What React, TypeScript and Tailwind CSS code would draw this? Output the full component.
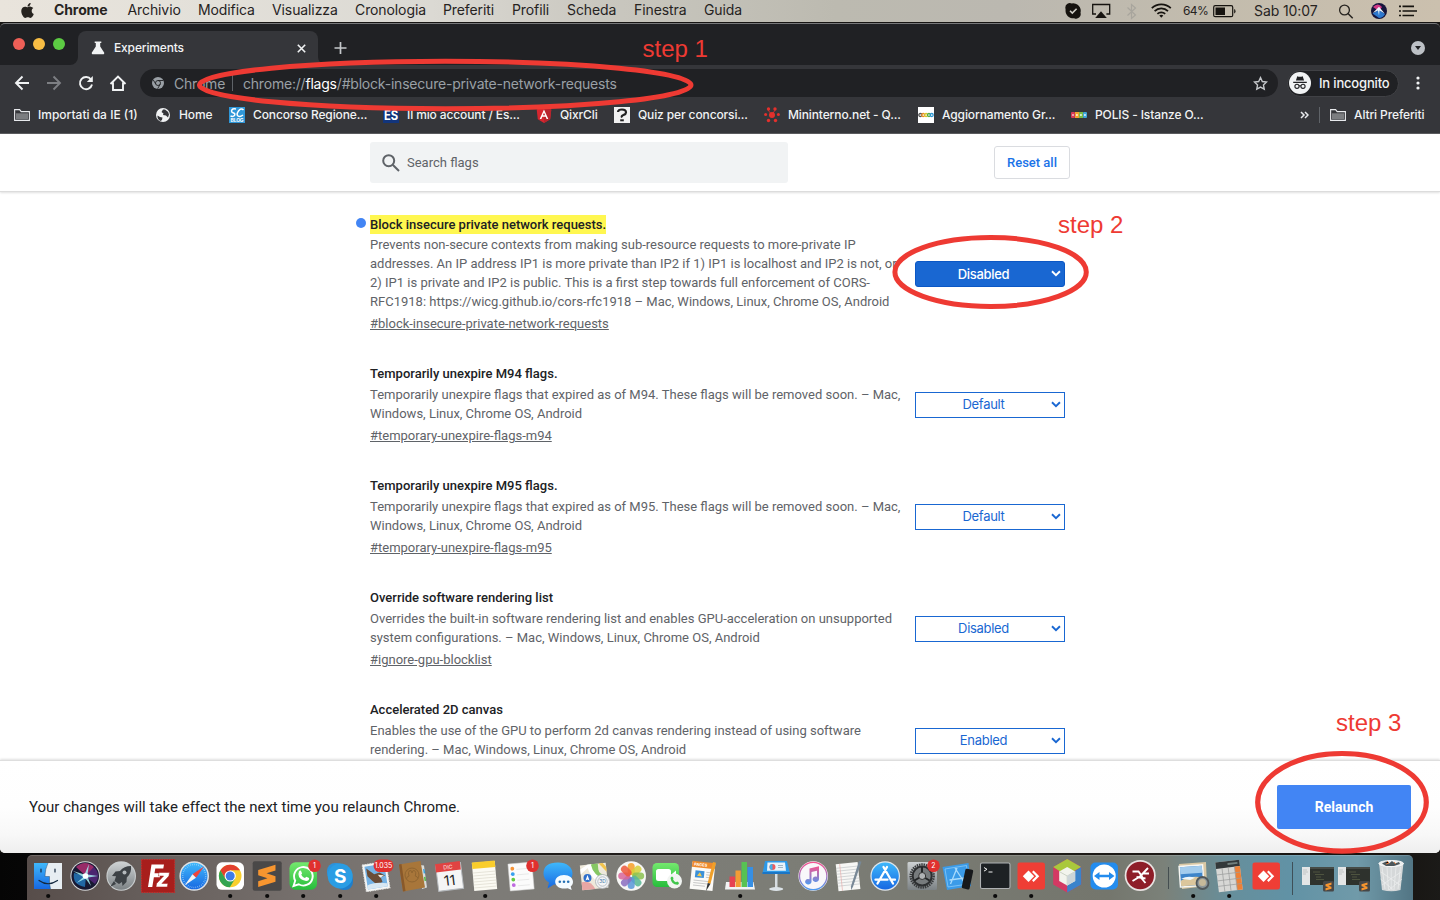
import React from "react";
import { FaApple } from "react-icons/fa";

type Kids = { children?: React.ReactNode };

/* ---------- macOS menu bar ---------- */

const Menu = ({ w, bold, children }: { w: string; bold?: boolean } & Kids) => (
  <span className={`${w} shrink-0 whitespace-nowrap ${bold ? "font-bold" : ""}`}>{children}</span>
);

const MenuBar = () => (
  <div className="flex h-[22px] items-center bg-[linear-gradient(90deg,#e9e4dc_0%,#e4e1da_12%,#dbd9d3_30%,#c9c7bf_42%,#bcbab0_58%,#bbb8b0_70%,#c3bcad_85%,#cbc0ae_100%)] text-[14px] leading-[20px] tracking-[-0.100px] text-[#26231f]">
    <span className="flex w-[54px] shrink-0 pb-[1px] pl-[20px]">
      <FaApple className="h-[17px] w-[15px]" />
    </span>
    <div className="flex pb-[2px]">
      <Menu w="w-[73.5px]" bold>Chrome</Menu>
      <Menu w="w-[70.5px]">Archivio</Menu>
      <Menu w="w-[74px]">Modifica</Menu>
      <Menu w="w-[83px]">Visualizza</Menu>
      <Menu w="w-[88px]">Cronologia</Menu>
      <Menu w="w-[69px]">Preferiti</Menu>
      <Menu w="w-[55px]">Profili</Menu>
      <Menu w="w-[67px]">Scheda</Menu>
      <Menu w="w-[70px]">Finestra</Menu>
      <Menu w="w-[361px]">Guida</Menu>
    </div>
    <svg className="h-[22px] w-[118px] shrink-0" viewBox="1065 0 118 22" fill="none">
      <path d="M1065.3 7.500a4.500 4.500 0 0 1 6.500-4 7.500 7.500 0 0 1 8.700 9.300 4.500 4.500 0 0 1-6.300 5.400 7.500 7.500 0 0 1-8.600-8.400z" fill="#16130f" />
      <path d="m1070 10.800 2.300 2.300 4.300-4.400" stroke="#d0cec6" strokeWidth="1.600" />
      <path d="M1096 14h-3.300V4.500h17V14h-3.300" stroke="#16130f" strokeWidth="1.300" />
      <path d="m1101 11.200 5.800 6.800h-11.600z" fill="#16130f" />
      <path d="m1127.500 7.500 8 7.500-4 3.500v-14l4 3.500-8 7.500" stroke="#a8a59d" strokeWidth="1.200" />
      <g stroke="#16130f" strokeWidth="1.700">
        <path d="M1151.800 8.200a13.500 13.500 0 0 1 19 0" />
        <path d="M1154.600 11.100a9.500 9.500 0 0 1 13.400 0" />
        <path d="M1157.400 13.900a5.600 5.600 0 0 1 7.800 0" />
      </g>
      <path d="m1161.300 17.700-2-2.100a3 3 0 0 1 4 0z" fill="#16130f" />
    </svg>
    <span className="w-[30px] shrink-0 text-[12px] tracking-[-0.600px]">64%</span>
    <svg className="h-[22px] w-[41px] shrink-0" viewBox="1213 0 41 22" fill="none">
      <rect x="1213.700" y="5.700" width="19" height="11" rx="1.500" stroke="#16130f" strokeWidth="1.200" />
      <rect x="1215.500" y="7.500" width="9.500" height="7.500" fill="#16130f" />
      <path d="M1234.200 9v4.500q1.300-.5 1.300-2.200t-1.300-2.300" fill="#16130f" />
    </svg>
    <span className="w-[84px] shrink-0 pb-[1px] whitespace-nowrap">Sab 10:07</span>
    <svg className="h-[22px] w-[102px] shrink-0" viewBox="1338 0 102 22" fill="none">
      <circle cx="1344.500" cy="10" r="4.900" stroke="#26231f" strokeWidth="1.300" />
      <path d="m1348 13.500 4.700 4.700" stroke="#26231f" strokeWidth="1.500" />
      <circle cx="1379" cy="11" r="8" fill="#15143c" />
      <path d="M1373 7q5-5 9 0l-3 4z" fill="#d23a86" />
      <path d="M1372.500 13.500 1379 10l6 4q-2 4-6 4z" fill="#2d78cf" />
      <path d="m1372.800 13 6.200-6.300 5.700 6.800-5.200-3-.5 5-1-5z" fill="#e9f5fd" />
      <path d="M1399 6.300h2m1.500 0H1414M1399 11h2m1.500 0H1417M1399 15.500h2m1.500 0H1414" stroke="#16130f" strokeWidth="1.700" />
    </svg>
  </div>
);

/* ---------- browser chrome ---------- */

const TabStrip = () => (
  <div className="flex h-[42px] items-end rounded-t-[5px] border-t border-[#77787a] bg-[#202124]">
    <div className="flex h-full w-[70px] shrink-0 items-center gap-[8px] pb-[1px] pl-[13px]">
      <i className="size-[12px] rounded-full bg-[#ee5f57]" />
      <i className="size-[12px] rounded-full bg-[#f8bd44]" />
      <i className="size-[12px] rounded-full bg-[#5ccb43]" />
    </div>
    <svg className="size-[8px] shrink-0" viewBox="0 0 8 8"><path d="M8 0v8H0a8 8 0 0 0 8-8" fill="#35363a" /></svg>
    <div className="flex h-[34px] w-[240px] shrink-0 items-center rounded-t-[8px] bg-[#35363a] pl-[13px]">
      <svg className="h-[14px] w-[14px]" viewBox="0 0 14 14" fill="#f1f3f4">
        <path d="M3.700.5h6.600v1.600H9.200v3.400l3.900 6a1.200 1.200 0 0 1-1 1.800H1.900a1.200 1.200 0 0 1-1-1.800l3.900-6V2.100H3.700z" />
      </svg>
      <span className="ml-[9px] w-[183px] text-[12px] font-medium tracking-[-0.150px] text-[#f1f3f4]">Experiments</span>
      <svg className="size-[9px]" viewBox="0 0 9 9"><path d="m.8.8 7.400 7.400m0-7.400L.8 8.200" stroke="#f1f3f4" strokeWidth="1.600" /></svg>
    </div>
    <svg className="size-[8px] shrink-0" viewBox="0 0 8 8"><path d="M0 0v8h8a8 8 0 0 1-8-8" fill="#35363a" /></svg>
    <svg className="ml-[7.500px] h-[34px] w-[13px] shrink-0" viewBox="0 0 13 34"><path d="M6.500 11v12M.5 17h12" stroke="#c4c7ca" strokeWidth="1.700" /></svg>
    <svg className="mr-[15px] ml-auto h-[34px] w-[14px]" viewBox="0 0 14 34">
      <circle cx="7" cy="17" r="7" fill="#bdc1c6" />
      <path d="M4 15h6l-3 4z" fill="#202124" />
    </svg>
  </div>
);

const Toolbar = () => (
  <div className="flex h-[36px] items-center bg-[#35363a]">
    <svg className="h-[36px] w-[140px] shrink-0" viewBox="0 65 140 36" fill="none" strokeWidth="1.900">
      <path d="M29 83H16m6.500-6.500L16 83l6.500 6.500" stroke="#f1f3f4" />
      <path d="M47 83h13m-6.500-6.500L60 83l-6.500 6.500" stroke="#7d7f83" />
      <path d="M91 79.500A6.100 6.100 0 1 0 92 84.500" stroke="#f1f3f4" />
      <path d="M92.800 76v6h-6z" fill="#f1f3f4" />
      <path d="M110.500 84 118 76.500l7.500 7.500M113 82.500V90h10v-7.500" stroke="#f1f3f4" />
    </svg>
    <div className="flex h-[28px] w-[1138px] shrink-0 items-center rounded-full bg-[#202124] pl-[12px] text-[14px] tracking-[-0.205px] text-[#9aa0a6]">
      <svg className="size-[12px] shrink-0" viewBox="0 0 12 12">
        <circle cx="6" cy="6" r="6" fill="#9aa0a6" />
        <circle cx="6" cy="6" r="2.500" fill="none" stroke="#202124" strokeWidth=".9" />
        <path d="M6 3.500h5.300M3.800 7.200 1.200 2.800M8.200 7.200 5.600 11.800" stroke="#202124" strokeWidth=".9" />
      </svg>
      <span className="ml-[10px] w-[58px] shrink-0">Chrome</span>
      <i className="mr-[10px] h-[16px] w-px bg-[#5f6368]" />
      <span className="w-[1010px] shrink-0 whitespace-nowrap">chrome://<span className="text-white">flags</span>/#block-insecure-private-network-requests</span>
      <svg className="size-[15px] shrink-0" viewBox="0 0 24 24" fill="none" stroke="#c4c7ca" strokeWidth="2.200">
        <path d="m12 2.500 2.900 6.300 6.800.8-5 4.700 1.300 6.800-6-3.400-6 3.400 1.300-6.800-5-4.700 6.800-.8z" />
      </svg>
    </div>
    <div className="ml-[9px] flex h-[27px] w-[112px] shrink-0 items-center rounded-full border border-[#404145] bg-[#202124] pl-[1px]">
      <svg className="size-[22px] shrink-0" viewBox="0 0 22 22">
        <circle cx="11" cy="11" r="11" fill="#f1f3f4" />
        <path d="M8.300 4.200q2.700 1 5.400 0l1.400 4.300H6.900zM4.200 9.700h13.600v1.200H4.200z" fill="#202124" />
        <g fill="none" stroke="#202124" strokeWidth="1.100"><circle cx="8" cy="14.300" r="2.100" /><circle cx="14" cy="14.300" r="2.100" /><path d="M10 14q1-.6 2 0" /></g>
      </svg>
      <span className="ml-[8px] pt-[1px] text-[13px] font-medium tracking-[-0.180px] whitespace-nowrap text-[#f1f3f4]">In incognito</span>
    </div>
    <svg className="ml-[17px] h-[14px] w-[4px]" viewBox="0 0 4 14" fill="#f1f3f4"><circle cx="2" cy="2" r="1.600" /><circle cx="2" cy="7" r="1.600" /><circle cx="2" cy="12" r="1.600" /></svg>
  </div>
);

const Bookmark = ({ w, icon, children }: { w: string; icon: React.ReactNode } & Kids) => (
  <div className={`flex ${w} h-full shrink-0 items-center gap-[8px] whitespace-nowrap`}>
    <svg className="size-[16px] shrink-0 overflow-visible" viewBox="0 0 16 16">{icon}</svg>
    <span>{children}</span>
  </div>
);

const folder = (
  <>
    <path d="M.6 13.400V2.600h5l1.600 2h8.200v8.800z" fill="none" stroke="#e8eaed" strokeWidth="1.100" />
    <path d="M2 6.300h12v5.800H2z" fill="#7b7d80" />
  </>
);

const BookmarksBar = () => (
  <div className="flex h-[33px] items-center border-b border-[#5a5b5e] bg-[#35363a] pb-[4px] pl-[14px] text-[12px] font-medium tracking-[-0.120px] text-[#f1f3f4]">
    <Bookmark w="w-[141px]" icon={folder}><span className="tracking-normal">Importati da IE (1)</span></Bookmark>
    <Bookmark w="w-[74px]" icon={<><circle cx="8" cy="8" r="7" fill="#f1f3f4" /><path d="M2.500 8.500 5 10l2.500.5L7 13l-1.500 1Q2 12 2.500 8.500M8 2.500 6.500 5l2 1.500L8 8l3 .5 2 2 1-3Q13 4 10 2.500z" fill="#35363a" /></>}>Home</Bookmark>
    <Bookmark w="w-[154px]" icon={<><path d="M0 0h16v16H0z" fill="#2f97d8" /><g fill="none" stroke="#fff"><path d="M7 2Q3 1 2.500 4q0 1.500 2 2t1 2.500Q4 10 1.500 9" strokeWidth="1.500" /><path d="M14.500 3Q12 .5 9.500 4t-.5 5q2 1.500 5-1" strokeWidth="1.500" /></g><text x="1.500" y="15" fontSize="5" fontWeight="bold" fill="#fff" textLength="13">BLOG</text></>}>Concorso Regione...</Bookmark>
    <Bookmark w="w-[153px]" icon={<><path d="M0 0h16v16H0z" fill="#12357c" /><text x="1" y="13" fontSize="13" fontWeight="bold" fill="#fff" textLength="14" lengthAdjust="spacingAndGlyphs">ES</text></>}>Il mio account / Es...</Bookmark>
    <Bookmark w="w-[78px]" icon={<><path d="m8 0 7.300 2.600-1.100 9.700L8 16l-6.200-3.700L.7 2.600z" fill="#d6262f" /><path d="m8 0 7.300 2.600-1.100 9.700L8 16z" fill="#b8242d" /><path d="m3.700 12 4.300-9.500 4.300 9.500h-1.700l-.9-2.200H6.300L5.400 12zm3.200-3.700h2.200L8 5.700z" fill="#fff" /></>}>QixrCli</Bookmark>
    <Bookmark w="w-[150px]" icon={<><path d="M0 0h16v16H0z" fill="#f1f1f1" /><path d="M4 5Q4 2.500 8 2.500T12 5.500Q12 7 9.500 8T8 10.500" fill="none" stroke="#222" strokeWidth="2.200" /><path d="M6.200 12.300h3.600v2H6.200z" fill="#222" /></>}>Quiz per concorsi...</Bookmark>
    <Bookmark w="w-[154px]" icon={<g fill="#e3302c"><circle cx="8" cy="8" r="3" /><circle cx="1.600" cy="7.500" r="1.500" /><circle cx="14.400" cy="7.500" r="1.500" /><circle cx="4.500" cy="2" r="1.700" /><circle cx="11" cy="2" r="1.700" /><circle cx="4.500" cy="13.500" r="1.700" /><circle cx="11.500" cy="13.500" r="1.700" /><path d="m4 3 4 5M11 3 8 8" stroke="#e3302c" strokeWidth=".8" /></g>}>Mininterno.net - Q...</Bookmark>
    <Bookmark w="w-[153px]" icon={<><path d="M0 0h16v16H0z" fill="#fff" /><g fill="none" strokeWidth="1.300"><circle cx="2.300" cy="8" r="1.500" stroke="#555" /><circle cx="5.200" cy="8" r="1.500" stroke="#e98b20" /><circle cx="8.100" cy="8" r="1.500" stroke="#d8c529" /><circle cx="11" cy="8" r="1.500" stroke="#4fae4a" /><circle cx="13.700" cy="8" r="1.500" stroke="#2d95d3" /></g></>}>Aggiornamento Gr...</Bookmark>
    <Bookmark w="w-[229px]" icon={<><rect x="0" y="5" width="4" height="6" rx="1" fill="#d43a56" /><path d="M4 5h4v6H4z" fill="#efa22f" /><path d="M8 5h4v6H8z" fill="#7bbb45" /><rect x="12" y="5" width="4" height="6" rx="1" fill="#3ea5d8" /><path d="M1.500 7h1v2h-1zM5.300 7h1.300v2H5.300zM9.300 7h1.300v2H9.300zM13.300 7h1.300v2h-1.300z" fill="#fff" /></>}>POLIS - Istanze O...</Bookmark>
    <svg className="h-[8px] w-[9px] shrink-0" viewBox="0 0 9 8" fill="none" stroke="#e8eaed" strokeWidth="1.500"><path d="m1 1 3 3-3 3M5 1l3 3-3 3" /></svg>
    <i className="mr-[10px] ml-[10px] h-[16px] w-px bg-[#5f6368]" />
    <Bookmark w="w-[100px]" icon={folder}>Altri Preferiti</Bookmark>
  </div>
);

/* ---------- flags page ---------- */

const Chevron = () => (
  <svg className="h-[7px] w-[10px]" viewBox="0 0 10 7" fill="none" stroke="currentColor" strokeWidth="1.900"><path d="m1 1.200 4 4 4-4" /></svg>
);

type Flag = { title: string; lines: string[]; link?: string; value: string; active?: boolean };

const flags: Flag[] = [
  {
    title: "Block insecure private network requests.",
    lines: [
      "Prevents non-secure contexts from making sub-resource requests to more-private IP",
      "addresses. An IP address IP1 is more private than IP2 if 1) IP1 is localhost and IP2 is not, or",
      "2) IP1 is private and IP2 is public. This is a first step towards full enforcement of CORS-",
      "RFC1918: https://wicg.github.io/cors-rfc1918 – Mac, Windows, Linux, Chrome OS, Android",
    ],
    link: "#block-insecure-private-network-requests",
    value: "Disabled",
    active: true,
  },
  {
    title: "Temporarily unexpire M94 flags.",
    lines: ["Temporarily unexpire flags that expired as of M94. These flags will be removed soon. – Mac,", "Windows, Linux, Chrome OS, Android"],
    link: "#temporary-unexpire-flags-m94",
    value: "Default",
  },
  {
    title: "Temporarily unexpire M95 flags.",
    lines: ["Temporarily unexpire flags that expired as of M95. These flags will be removed soon. – Mac,", "Windows, Linux, Chrome OS, Android"],
    link: "#temporary-unexpire-flags-m95",
    value: "Default",
  },
  {
    title: "Override software rendering list",
    lines: ["Overrides the built-in software rendering list and enables GPU-acceleration on unsupported", "system configurations. – Mac, Windows, Linux, Chrome OS, Android"],
    link: "#ignore-gpu-blocklist",
    value: "Disabled",
  },
  {
    title: "Accelerated 2D canvas",
    lines: ["Enables the use of the GPU to perform 2d canvas rendering instead of using software", "rendering. – Mac, Windows, Linux, Chrome OS, Android"],
    value: "Enabled",
  },
];

const FlagRow = ({ f }: { f: Flag }) => (
  <div className="mb-[31.100px] flex shrink-0 items-center">
    <div className="w-[559px] shrink-0 whitespace-nowrap text-[#5f6368]">
      <div className="flex h-[19px] items-center text-[#202124]">
        <span className="flex w-[14px] pb-[3px]">{f.active && <i className="size-[10px] rounded-full bg-[#4285f4]" />}</span>
        <span className={`leading-[19px] font-medium ${f.active ? "bg-[#fff750]" : ""}`}>{f.title}</span>
      </div>
      <div className="mt-[2.900px] pl-[14px] leading-[18.800px]">
        {f.lines.map((l) => <div key={l}>{l}</div>)}
      </div>
      <div className="mt-[2.400px] h-[19px] pl-[14px] leading-[19px] underline">{f.link}</div>
    </div>
    <div className={`flex h-[26px] w-[150px] shrink-0 items-center justify-between border pr-[3px] font-[Inter] text-[13px] tracking-[-0.300px] ${f.active ? "rounded-[3px] border-[#0b57c5] bg-[#1967d2] font-medium text-white" : "border-[#1967d2] bg-white text-[#1967d2]"}`}>
      <span className="w-[136px] pt-[1px] text-center">{f.value}</span>
      <Chevron />
    </div>
  </div>
);

const FlagsPage = () => (
  <div className="flex h-[719px] flex-col overflow-hidden rounded-b-[5px] bg-white font-[Roboto] text-[13px]">
    <div className="flex h-[58px] shrink-0 items-center border-b border-[#dcdcdc] pl-[370px] shadow-[0_1px_2px_rgba(0,0,0,0.12)]">
      <div className="flex h-[41px] w-[418px] items-center rounded-[3px] bg-[#f1f3f4] pl-[12px] text-[#5f6368]">
        <svg className="size-[18px]" viewBox="0 0 18 18" fill="none" stroke="#5f6368" strokeWidth="2"><circle cx="6.700" cy="6.700" r="5.500" /><path d="m10.700 10.700 6.300 6.300" /></svg>
        <span className="ml-[7px]">Search flags</span>
      </div>
      <div className="ml-[206px] flex h-[33px] w-[76px] items-center justify-center rounded-[3px] border border-[#dadce0] font-medium text-[#1a73e8]">Reset all</div>
    </div>
    <div className="flex min-h-0 flex-1 flex-col overflow-hidden pt-[22.600px] pl-[356px]">
      {flags.map((f) => <FlagRow key={f.title} f={f} />)}
    </div>
    <div className="flex h-[93px] shrink-0 items-center justify-between border-t border-[#dedede] bg-[linear-gradient(180deg,#fff_0%,#fefefe_50%,#f8f8f8_80%,#eeeeee_100%)] pr-[29px] pl-[29px] text-[15px] tracking-normal text-[#202124] shadow-[0_-1px_2px_rgba(0,0,0,0.12)]">
      <span>Your changes will take effect the next time you relaunch Chrome.</span>
      <div className="flex h-[44px] w-[134px] items-center justify-center rounded-[2px] bg-[#4285f4] text-[14px] font-bold text-white">Relaunch</div>
    </div>
  </div>
);

/* ---------- dock ---------- */

const Badge = ({ t, x = 29.500, w = 12.600 }: { t: string; x?: number; w?: number }) => (
  <g>
    <rect x={x - w / 2} y="3.500" width={w} height="12.600" rx="6.300" fill="#e0302f" />
    <text x={x} y="12.300" fontSize="7" textAnchor="middle" fill="#fff">{t}</text>
  </g>
);

const App_ = ({ dot, children }: { dot?: boolean } & Kids) => (
  <svg className="h-[44px] w-[36.400px] shrink-0 overflow-visible" viewBox="0 0 36.400 44">
    {children}
    {dot && <circle cx="18.200" cy="40" r="2.100" fill="#0b0b0b" />}
  </svg>
);

const petals = ["#f6a12a", "#d6d23a", "#8cc152", "#57b894", "#5a97d8", "#8a6fc0", "#d9679a", "#ee5a3c"];

const AnyDesk = () => (
  <>
    <rect x="4.500" y="6.500" width="27.500" height="27" rx="2.500" fill="#ef3e35" />
    <path d="m15.500 14.500 5.700 5.700-5.700 5.700-5.700-5.700z" fill="#fff" />
    <path d="m19.800 15.300 4.900 4.900-4.900 4.900" fill="none" stroke="#fff" strokeWidth="2.200" />
  </>
);

const MiniWindow = () => (
  <>
    <path d="M2 11h32v18H2z" fill="#2e322d" />
    <path d="M2 11h8v18H2z" fill="#e4e6e6" />
    <path d="M3 14h4m-4 2h5m-5 2h3" stroke="#b3b6b6" strokeWidth=".7" />
    <path d="M10 12h24" stroke="#585d58" strokeWidth="1.200" />
    <path d="M13 16h7m-5 2.500h9m-8 2.500h5m-5 2.500h8" stroke="#5b6348" strokeWidth=".7" />
    <rect x="23" y="25" width="11" height="10.500" rx="1.500" fill="#474747" />
    <path d="m25.500 28.300 6-1.800v2.200l-3 1 3 1v2l-6 1.800v-2.200l3.200-1-3.200-1z" fill="#f7952f" />
  </>
);

const Dock = () => (
  <div className="flex h-[47px] items-end bg-[linear-gradient(90deg,#050505_0%,#1d1a18_30%,#24211e_60%,#16130f_96%,#1b1a18_100%)] pl-[27px]">
    <div className="flex h-[45px] w-[1386px] items-end rounded-t-[5px] border-t border-white/15 bg-[linear-gradient(90deg,#574d4a_0%,#655d5a_8%,#76706d_20%,#7d7b77_33%,#7c7d76_55%,#74766d_78%,#7b8179_82%,#668f9c_87%,#6192a5_91%,#709aa9_96%,#527584_100%)] pl-[3.400px]">
      <App_ dot>
        <defs>
          <linearGradient id="blue" x1="0" y1="0" x2="0" y2="1"><stop stopColor="#3fb8fb" /><stop offset="1" stopColor="#1768e2" /></linearGradient>
          <linearGradient id="silver" x1="0" y1="0" x2="0" y2="1"><stop stopColor="#cdd1d3" /><stop offset="1" stopColor="#7c8285" /></linearGradient>
          <linearGradient id="green" x1="0" y1="0" x2="0" y2="1"><stop stopColor="#74e96e" /><stop offset="1" stopColor="#27bd3c" /></linearGradient>
          <linearGradient id="tunes" x1="0" y1="0" x2="0" y2="1"><stop stopColor="#f6538f" /><stop offset="1" stopColor="#4f9af0" /></linearGradient>
        </defs>
        <path d="M4 7h28v26H4z" fill="#e7edf2" />
        <path d="M4 7h14q-3 6-3 13.500h4.500q-.5 7 1 12.500H4z" fill="url(#blue)" />
        <path d="M18 7q-3 6-3 13.500h4.500q-.5 7 1 12.500" fill="none" stroke="#234d78" strokeWidth=".5" />
        <path d="M11 13v3m14-3v3M9 24.500q9 6.500 18.500 0" fill="none" stroke="#14283f" strokeWidth="1.200" strokeLinecap="round" />
      </App_>
      <App_>
        <circle cx="18.200" cy="20" r="14.800" fill="#d6d7d9" />
        <circle cx="18.200" cy="20" r="13.800" fill="#171832" />
        <path d="M9 11q9-8 18 0l-8 9z" fill="#b92f76" opacity=".8" />
        <path d="M27 11q8 8 1 17l-10-8z" fill="#5e2a86" opacity=".75" />
        <path d="M7 17q-2 12 11 14l1-11z" fill="#2376b8" opacity=".85" />
        <path d="m6 15 11.500 3.500L22 8l-1.500 10.500L31 20l-10 1.500 3 8.500-5.500-7.500-9 4.500 7-6z" fill="#a8f1f4" opacity=".85" />
        <circle cx="18.500" cy="20" r="2.800" fill="#fff" />
      </App_>
      <App_>
        <circle cx="18.200" cy="20" r="14.800" fill="#c9cdce" />
        <circle cx="18.200" cy="20" r="13.700" fill="url(#silver)" />
        <path d="M28 10q-7 0-11 5l-4.500.5L9 20l4 .3-1.500 4.700L16 28l3-2 .5 4 4-4 .3-4.500Q29 17 28 10M11 25l-4 6 6-3z" fill="#3d4246" />
        <circle cx="21.500" cy="16.500" r="2" fill="#b4b9bc" />
      </App_>
      <App_>
        <path d="M1.500 3.500h33v33h-33z" fill="#a81e1c" stroke="#c32b28" strokeWidth="1.200" strokeDasharray="1.500 1" />
        <path d="M8 31 11.500 8.500H24l-.7 4H15.300l-.8 4.800h6l-.6 4h-6L12.300 31z" fill="#fff" />
        <path d="M19 16.500h10.500l-.6 3.500-7 7.500h6l-.6 3.500H16l.6-3.500 7-7.500h-5.200z" fill="#fff" stroke="#a81e1c" strokeWidth=".5" />
      </App_>
      <App_>
        <circle cx="18.200" cy="20" r="14.800" fill="#dfe3e6" />
        <circle cx="18.200" cy="20" r="13.300" fill="url(#blue)" />
        <circle cx="18.200" cy="20" r="11.500" fill="none" stroke="#b6e0fb" strokeWidth="1.500" strokeDasharray=".5 1.500" />
        <path d="m28 10.500-8 11.300-3.500-3.500z" fill="#f0443c" /><path d="m8.500 29.500 8-11.300 3.500 3.500z" fill="#f4f4f4" />
      </App_>
      <App_ dot>
        <rect x="4.500" y="6.300" width="27.500" height="27.500" rx="5.500" fill="#fff" />
        <circle cx="18.200" cy="20" r="11.300" fill="#f9cf2d" />
        <path d="M8.400 14.300a11.300 11.300 0 0 1 19.600 0H18.200l-4.900 8.600z" fill="#e3402f" />
        <path d="M8.400 14.300a11.300 11.300 0 0 0 9.400 17l5.300-8.500H13.300z" fill="#33a451" />
        <circle cx="18.200" cy="20" r="5.600" fill="#fff" /><circle cx="18.200" cy="20" r="4.500" fill="#3d7ce8" />
      </App_>
      <App_ dot>
        <rect x="3.700" y="5.300" width="29" height="29.500" rx="2" fill="#4a4848" />
        <path d="m9.200 14 17.300-5.300v5.800l-9 2.800 9 2.900v5.500L9.200 31v-5.700l9.300-3-9.300-3z" fill="#f7952f" />
      </App_>
      <App_ dot>
        <rect x="4.500" y="6.300" width="27.500" height="27.500" rx="6" fill="url(#green)" />
        <path d="m8.500 30 1.700-5.300a9.300 9.300 0 1 1 3.500 3.600z" fill="none" stroke="#fff" strokeWidth="1.900" />
        <path d="M14 15.500q1.500-2 2.300 0l.8 2-.9 1.300q1.300 2.400 3.700 3.300l1.500-1.300 2.700 1.300q.3 3-3 3-7.500-1.500-7.700-7z" fill="#fff" />
        <Badge t="1" />
      </App_>
      <App_ dot>
        <rect x="5" y="7" width="18" height="18" rx="8" fill="#2c93dc" /><rect x="14" y="16" width="17" height="18" rx="8" fill="#1f7fcc" />
        <circle cx="18.200" cy="20" r="12.500" fill="#2a9de4" />
        <text x="18.200" y="27" fontSize="19" fontWeight="bold" textAnchor="middle" fill="#fff">S</text>
      </App_>
      <App_ dot>
        <g transform="rotate(-9 18 20)">
          <path d="M6 7h24v27H6z" fill="#f6f6f4" stroke="#dedfdd" strokeDasharray="1.500 1" /><path d="M8 9h20v23H8z" fill="#75b2e4" />
          <path d="m9.500 11 7 7 5.500-1 5 4-4.500 1 1 5-6 1.500-4-4.500-4-5z" fill="#6b4c36" /><path d="m20 19 6 1.500-4 2z" fill="#f4f1ea" /><path d="M8 28q8-3 20 1v3H8z" fill="#d7e7f2" />
        </g>
        <Badge t="1.035" x={25.500} w={20} />
      </App_>
      <App_>
        <path d="m26 9 4 .5 3 22-5 1.500z" fill="#d8dcdb" /><path d="M29 13l1.500.2.800 4-1.500.2z" fill="#3aa0e0" /><path d="m30 21 1.500-.2.600 4-1.500.4z" fill="#55b948" />
        <path d="M5 8.500 26.500 5 31 31.500 9 35.500z" fill="#a8763a" /><path d="M5 8.500 7.500 8l4 27-2.500.5z" fill="#89592a" />
        <circle cx="18" cy="19" r="7" fill="none" stroke="#8f6430" />
        <path d="M12.500 23q0-2.500 2.600-3-1.600-4.500.9-5.500 2.500 0 2 2.500 0-2.500 2-2.500 2.800 1 1.200 5.500 2.500.5 2.700 2.500" fill="none" stroke="#8f6430" />
      </App_>
      <App_>
        <g transform="rotate(-7 18 20)"><path d="M6 8h25v26H6z" fill="#f5f5f5" stroke="#b6babe" strokeWidth="1" /><path d="M5.500 6.500h25v8.500h-25z" fill="#e14342" />
          <text x="18" y="13" fontSize="5.500" textAnchor="middle" fill="#ffe8e6">DIC</text><text x="18" y="29.500" fontSize="14" textAnchor="middle" fill="#222">11</text></g>
      </App_>
      <App_ dot>
        <g transform="rotate(-5 18 20)"><path d="M6 6h23v28H6z" fill="#fbfaf3" /><path d="M6 5.500h23V12H6z" fill="#f9cd2c" /><path d="M6 16h23M6 19h23M6 22h23M6 25h23M6 28h23M6 31h23" stroke="#d8d5c8" strokeWidth=".6" /></g>
      </App_>
      <App_>
        <g transform="rotate(-5 18 20)"><path d="M6 7h24v27H6z" fill="#fbfbfb" stroke="#d1d1d1" strokeWidth=".5" /><circle cx="10" cy="12" r="1.900" fill="#f69438" /><circle cx="10" cy="17.500" r="1.900" fill="#37a0ee" /><circle cx="10" cy="23" r="1.900" fill="#64cb43" /><circle cx="10" cy="28.500" r="1.900" fill="#bf6be0" /><path d="M14 13h12M14 18.500h12M14 24h12M14 29.500h12" stroke="#ddd" strokeWidth=".6" /></g>
        <Badge t="1" />
      </App_>
      <App_>
        <path d="M18 6.500c9 0 14.500 4.800 14.500 11S27 28.500 18 28.500l-4 .0-6.500 4 1.500-6Q3.500 23.500 3.500 17.500 3.500 6.500 18 6.500" fill="url(#blue)" />
        <path d="M24 19c5.500 0 9 3 9 6.800 0 2-.8 3.700-2.300 4.800l1 3.300-4-1.700c-7.500 1.700-12.500-2-12.500-6.400 0-3.800 3.500-6.800 8.800-6.800" fill="#f5fbff" />
        <circle cx="19.800" cy="25.800" r="1.300" fill="#2571b5" /><circle cx="24" cy="25.800" r="1.300" fill="#2571b5" /><circle cx="28.200" cy="25.800" r="1.300" fill="#2571b5" />
      </App_>
      <App_>
        <g transform="rotate(-6 18 20)"><path d="M5 8h26v25H5z" fill="#eee9db" /><path d="M14 8h9v6q0 5 8 7v4q-12-2-13-9z" fill="#86c764" /><path d="m5 12 8-4h4L5 17zM16 8q1 12 15 19v6Q14 25 12 8z" fill="#fff" /><path d="M5 25q9-2 13 8H5z" fill="#e8a6a4" /><path d="M24 8h4l3 4v5z" fill="#f2c34d" /></g>
        <circle cx="11.500" cy="22" r="4" fill="#2f6fcb" /><path d="m11.500 19 2 5.500-2-1-2 1z" fill="#fff" />
        <circle cx="26.500" cy="25.500" r="7" fill="#f4f5f6" stroke="#a9afb4" strokeWidth=".8" /><circle cx="26.500" cy="25.500" r="4.700" fill="none" stroke="#9faab5" strokeWidth=".7" /><text x="26.500" y="27.500" fontSize="5" textAnchor="middle" fill="#3c75a7">3D</text>
      </App_>
      <App_>
        <circle cx="18.200" cy="20" r="14.800" fill="#f7f7f5" />
        {petals.map((c, i) => <rect key={c} x="14.700" y="7" width="7" height="12" rx="3.500" fill={c} opacity=".86" transform={`rotate(${i * 45} 18.200 20)`} />)}
      </App_>
      <App_>
        <rect x="3.500" y="7" width="26.500" height="24" rx="4.500" fill="url(#green)" /><rect x="7" y="13" width="15" height="12" rx="2.500" fill="#fff" /><path d="m23 18 4-3.500v9L23 20z" fill="#fff" />
        <circle cx="25.500" cy="25" r="7.500" fill="#f2f5f2" /><path d="M21.500 22q1.500-3 3 0l-.4 1.500q1 2 2.800 2.800l1.300-.9q3.200 1.600.5 3.300-6.200.3-7.200-6.700" fill="#41c64b" />
      </App_>
      <App_>
        <g transform="rotate(6 18 20)"><path d="M6 7h23v27H6z" fill="#fbfaf7" /><path d="M6 6h23v6H6z" fill="#ef8a2c" /><text x="8" y="10.500" fontSize="4" fontWeight="bold" fill="#fff">PAGES</text><path d="M10 15h9v7h-9z" fill="#3c91d8" /><path d="m14.500 16.500 2.500 4h-5z" fill="#f6ca4b" /><path d="M9 25h17M9 27.500h17M9 30h12M21 16h5m-5 2.500h5m-5 2.500h5" stroke="#bdbdbd" strokeWidth=".8" /></g>
        <path d="m28 6 3 .8-5.500 21L22.700 27z" fill="#f0a029" /><path d="M22.700 27l2.800.8L21 35z" fill="#343536" />
      </App_>
      <App_ dot>
        <path d="M4 26h27.500l1.500 7.500H3z" fill="#f1f3f4" /><path d="M7.500 20.500H13V31H7.500z" fill="#e64352" /><path d="M13.500 14.500h5.300V31h-5.300z" fill="#f39c35" /><path d="M19.500 6H25v25h-5.500z" fill="#57c253" /><path d="M25.500 11H31v20h-5.500z" fill="#368fe4" />
      </App_>
      <App_>
        <path d="M7 5h22l3 12.500H4.500z" fill="#2d99e8" /><path d="m9.500 6.500 17.500.0 1 8.300H9z" fill="#eaf4fb" /><circle cx="14.500" cy="11" r="3" fill="#ef5a5e" /><path d="M14.500 8v6q-3 0-3-3t3-3" fill="#46b0e7" /><path d="M20 9.500h5m-5 2h5" stroke="#8fa4b5" strokeWidth=".8" /><path d="M4.500 16h27.500v2H4.500z" fill="#1b75c4" /><path d="M17 18h2.500v14H17z" fill="#d7dde1" /><ellipse cx="18.200" cy="33" rx="7" ry="1.900" fill="#dce3e8" />
      </App_>
      <App_>
        <circle cx="18.200" cy="20" r="14.800" fill="#f9f7fa" /><circle cx="18.200" cy="20" r="13.700" fill="none" stroke="url(#tunes)" strokeWidth="1.300" />
        <path d="m14.500 12.500 9.500-2.300v13a3.200 2.700 0 1 1-2-2.500v-6l-5.500 1.400v9.700a3.200 2.700 0 1 1-2-2.500z" fill="url(#tunes)" />
      </App_>
      <App_>
        <g transform="rotate(-6 18 20)"><path d="M6 7h22v27H6z" fill="#f7f7f5" /><path d="M6 11h22M6 14h22M6 17h22M6 20h22M6 23h22M6 26h22M6 29h22" stroke="#bcc0c4" strokeWidth=".6" /><path d="M10 7v27" stroke="#e59a98" strokeWidth=".5" /></g>
        <path d="m28 5 2.500.8-8.500 25-2 3.500v-4z" fill="#788896" />
      </App_>
      <App_>
        <circle cx="18.200" cy="20" r="14.800" fill="#e1e7ec" /><circle cx="18.200" cy="20" r="13.600" fill="url(#blue)" />
        <path d="m20 11-9.500 16.500M16.500 11 26 27.500M8.500 23.700h12m3 0h4.500" fill="none" stroke="#fff" strokeWidth="2.300" strokeLinecap="round" />
      </App_>
      <App_>
        <rect x="3.500" y="6" width="29.500" height="28" rx="1.500" fill="url(#silver)" /><circle cx="18.200" cy="20" r="11.500" fill="none" stroke="#393b3d" strokeWidth="2.500" strokeDasharray="1.500 .8" /><circle cx="18.200" cy="20" r="9.500" fill="#777b7d" stroke="#2d2f31" strokeWidth="2" /><path d="M18 20V11m0 9 7.500 4.500M18 20l-7.500 4.500" stroke="#242628" strokeWidth="2" /><circle cx="18.200" cy="20" r="3.500" fill="#b0b3b5" stroke="#333" />
        <Badge t="2" />
      </App_>
      <App_>
        <path d="m2.500 11 26-4 2.500 23-24 4z" fill="#3b9be8" /><path d="m5 13 21.500-3.500L28.500 28 8 31z" fill="none" stroke="#94d0fa" strokeWidth=".7" /><path d="m17 12-6.500 16M15 12l9 14M9.500 24l15-2" stroke="#a9dbfc" strokeWidth="1.300" />
        <rect x="23.500" y="13" width="8" height="20" rx="1.500" fill="#17191c" transform="rotate(12 27 23)" />
      </App_>
      <App_ dot><rect x="3.500" y="7" width="29.500" height="25.500" rx="1.500" fill="#1d2124" stroke="#aeb1b3" strokeWidth="1.100" /><path d="m7 11.500 3 1.800-3 1.800M11.500 16h4" fill="none" stroke="#f3f3f3" /></App_>
      <App_ dot><AnyDesk /></App_>
      <App_>
        <path d="m18.200 3 14 8v17.500l-14 8-14-8V11z" fill="#d33963" /><path d="m18.200 3 14 8-8 4.500-6-3.500-7 3.500-7-4.500z" fill="#a9c83c" /><path d="M32.200 11v17.500l-14 8v-8.500l7-4v-8.500z" fill="#3a83cb" />
        <path d="m18.200 11 8 4.500v9.500l-8 4.500-8-4.500v-9.500z" fill="#f2f4ed" /><path d="m10.200 15.500 8 4.500 8-4.500M18.200 20v9.500" fill="none" stroke="#ccd3c6" /><path d="M18.200 20l8-4.500v9.500l-8 4.500z" fill="#ccd5d8" />
      </App_>
      <App_>
        <rect x="4.500" y="6.500" width="27.500" height="27" rx="5" fill="#238cee" /><circle cx="18.200" cy="20" r="11.500" fill="#fff" /><path d="m8 20 5.500-4v2.800h9.500V16l5.500 4-5.500 4v-2.800h-9.500V24z" fill="#238cee" />
      </App_>
      <App_>
        <circle cx="18.200" cy="19.500" r="15.500" fill="#e9e3e2" /><circle cx="18.200" cy="19.500" r="13.800" fill="#8e1d28" />
        <path d="M10.500 15.500h6l4 5.500M26 12l-8 8.500-7.500 4.500M27 17.500h-6M18 20.500l5.500 6.500M14.500 21l9 1.500" fill="none" stroke="#fff" strokeWidth="1.900" />
      </App_>
      <i className="mb-[11px] ml-[9px] h-[22px] w-px shrink-0 bg-[#454e50]" />
      <i className="w-[6.600px] shrink-0" />
      <App_ dot>
        <path d="m4 8 27-2 1 24-25 3z" fill="#d9c8a5" /><g transform="rotate(-4 16 20)"><path d="M4 9h25v22H4z" fill="#f7f6f2" /><path d="M5.500 10.500h22v19h-22z" fill="#3d84c9" /><path d="M5.500 10.500h22v7h-22z" fill="#a3cced" /><path d="M5.500 24q9-5 22-2v7.500h-22z" fill="#dbc69c" /><path d="M6 22q7-3 14 0l-5 2z" fill="#edf6fa" /></g>
        <circle cx="27.500" cy="27" r="6" fill="#8e979a" stroke="#51585b" strokeWidth="1.800" /><circle cx="27.500" cy="26.500" r="3.500" fill="#c6b99a" />
      </App_>
      <App_ dot>
        <g transform="rotate(-7 18 20)"><path d="M6 5h24v30H6z" fill="#d7d7d5" /><path d="M6 5h24v6.500H6z" fill="#33383a" /><path d="M24.500 11.500H30V35h-5.500z" fill="#ee8036" /><path d="M6 17.500h24M6 23.500h24M6 29h24M12 11.500V35M18.200 11.500V35M24.500 11.500V35" stroke="#9b9d9d" strokeWidth=".7" /><path d="M18 7h10v2H18z" fill="#73807e" /></g>
      </App_>
      <App_><AnyDesk /></App_>
      <i className="mb-[5px] ml-[8px] h-[33px] w-px shrink-0 bg-[#3f5058]" />
      <i className="w-[6.600px] shrink-0" />
      <App_><MiniWindow /></App_>
      <App_><MiniWindow /></App_>
      <App_>
        <path d="M6 7h24.500l-3 27q-9 2.500-18.500 0z" fill="#d5d8d9" /><path d="m9 11 3 22m2-22 1.500 23M18.200 11v23M23 11l-2 23M27.500 11 25 33M8 16l19 13M28 16 9 29M7.500 23l13 11M29 23 16 34" stroke="#f5f6f6" strokeWidth=".8" opacity=".7" />
        <ellipse cx="18.200" cy="7.500" rx="12.300" ry="3" fill="#e9ecec" stroke="#f8f8f8" /><path d="m9 7.500 4-2 3 2 3-2.500 3 2.500 4-1.500 1 2-6 2H13z" fill="#4c565a" /><path d="m14 5 2 2-3 1m8-2 2 2" stroke="#dc8148" />
      </App_>
    </div>
  </div>
);

/* ---------- annotations drawn over the desktop ---------- */

const Step = ({ at, children }: { at: string } & Kids) => (
  <span className={`absolute ${at} font-['Liberation_Sans'] text-[24px] leading-[28px] whitespace-nowrap text-[#ee3a33]`}>{children}</span>
);

const Annotations = () => (
  <div className="pointer-events-none absolute inset-0">
    <svg className="absolute inset-0" width="1440" height="900" fill="none" stroke="#ee3a33">
      <ellipse cx="445.200" cy="85" rx="245.800" ry="23.700" strokeWidth="5" />
      <ellipse cx="990.600" cy="272" rx="95.700" ry="34.500" strokeWidth="5" />
      <ellipse cx="1342" cy="802.300" rx="84.300" ry="48.800" strokeWidth="5.200" />
    </svg>
    <Step at="top-[35px] left-[642.500px]">step 1</Step>
    <Step at="top-[211px] left-[1058px]">step 2</Step>
    <Step at="top-[709px] left-[1336px]">step 3</Step>
  </div>
);

export default function App() {
  return (
    <div className="relative flex h-[900px] w-[1440px] flex-col overflow-hidden bg-[#171513] font-[Inter]">
      <MenuBar />
      <div className="mt-[1px] flex flex-col">
        <TabStrip />
        <Toolbar />
        <BookmarksBar />
        <FlagsPage />
      </div>
      <Dock />
      <Annotations />
    </div>
  );
}
